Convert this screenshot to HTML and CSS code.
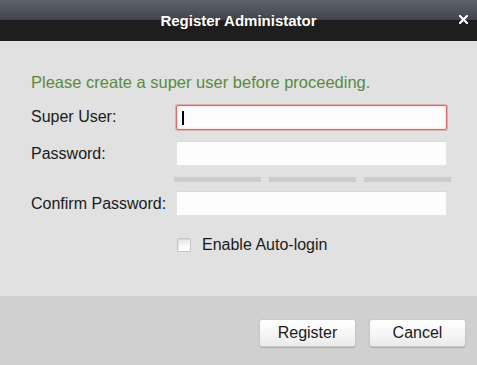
FILE: index.html
```html
<!DOCTYPE html>
<html lang="en">
<head>
<meta charset="utf-8">
<title>Register Administator</title>
<link rel="stylesheet" href="styles.css">
</head>
<body>
<div class="dialog">
  <div class="titlebar">
    <span class="title">Register Administator</span>
    <svg class="close" width="9" height="9" viewBox="0 0 9 9" aria-label="Close">
      <path d="M1 1 L8 8 M8 1 L1 8" stroke="#ffffff" stroke-width="2.2" stroke-linecap="square"/>
    </svg>
  </div>
  <div class="content">
    <p class="message">Please create a super user before proceeding.</p>
    <div class="form">
      <label class="label">Super User:</label>
      <div class="field focused"><input type="text"><span class="caret"></span></div>
      <label class="label">Password:</label>
      <div class="field"><input type="password"></div>
      <div class="strength">
        <span class="bar"></span><span class="bar"></span><span class="bar"></span>
      </div>
      <label class="label">Confirm Password:</label>
      <div class="field"><input type="password"></div>
      <div class="check-row">
        <span class="checkbox"></span>
        <span class="check-label">Enable Auto-login</span>
      </div>
    </div>
  </div>
  <div class="footer">
    <button class="btn">Register</button>
    <button class="btn">Cancel</button>
  </div>
</div>
</body>
</html>
```

FILE: styles.css
```css
html, body {
  margin: 0;
  padding: 0;
}
body {
  width: 477px;
  height: 365px;
  overflow: hidden;
  font-family: "Liberation Sans", Arial, sans-serif;
  font-size: 16px;
  color: #1a1a1a;
}
.dialog {
  display: flex;
  flex-direction: column;
  height: 365px;
}
.titlebar {
  position: relative;
  height: 41px;
  flex: none;
  display: flex;
  align-items: center;
  justify-content: center;
  background: linear-gradient(to bottom, #5e636b 0, #40444a 20px, #1e1e1e 20px, #1e1e1e 100%);
}
.title {
  color: #ffffff;
  font-weight: bold;
  font-size: 15px;
  line-height: 18px;
  margin-top: 1px;
}
.close {
  position: absolute;
  right: 9px;
  top: 15px;
}
.content {
  flex: none;
  height: 255px;
  background: #e1e1e1;
  padding: 0 0 0 31px;
  box-sizing: border-box;
}
.message {
  margin: 0;
  padding-top: 32px;
  line-height: 18px;
  font-size: 16.5px;
  color: #5a8a40;
}
.form {
  margin-top: 13px;
  display: grid;
  grid-template-columns: 145px 271px;
  grid-auto-rows: auto;
  align-items: center;
}
.label {
  line-height: 18px;
}
.field {
  position: relative;
  height: 25px;
  box-sizing: border-box;
  border: 1px solid #e4e4e4;
  border-top-color: #dadada;
  background: #fdfdfd;
}
.field input {
  display: block;
  width: 100%;
  height: 100%;
  border: 0;
  padding: 0 5px;
  box-sizing: border-box;
  background: transparent;
  outline: none;
  font: inherit;
}
.form > .field:nth-of-type(1) {
  margin-top: 1px;
}
.field.focused {
  border: 1px solid #d66b6b;
  box-shadow: 0 0 0 1px rgba(214, 120, 120, 0.45), inset 0 0 3px rgba(230, 110, 110, 0.35);
  border-radius: 2px;
}
.caret {
  position: absolute;
  left: 5px;
  top: 5px;
  width: 2px;
  height: 14px;
  background: #000000;
}
.form > .field:nth-child(4) {
  margin-top: 11px;
}
.form > label:nth-child(3) {
  margin-top: 11px;
}
.strength {
  grid-column: 2;
  margin: 11px 0 0 -2px;
  width: 277px;
  display: grid;
  grid-template-columns: 87px 87px 87px;
  column-gap: 8px;
}
.bar {
  height: 5px;
  background: #cdcdcd;
}
.form > label:nth-child(6),
.form > .field:nth-child(7) {
  margin-top: 9px;
}
.check-row {
  grid-column: 2;
  margin-top: 20px;
  display: flex;
  align-items: center;
  gap: 11px;
  margin-left: 1px;
}
.checkbox {
  width: 14px;
  height: 14px;
  box-sizing: border-box;
  border: 1px solid #c6c6c6;
  border-radius: 2px;
  background: linear-gradient(to bottom, #e6e6e6 0, #fafafa 60%, #ffffff 100%);
  box-shadow: inset 1px 1px 1px rgba(0, 0, 0, 0.08);
}
.check-label {
  line-height: 18px;
}
.footer {
  flex: 1;
  background: #d0d0d0;
  display: flex;
  justify-content: flex-end;
  align-items: flex-start;
  gap: 13px;
  padding: 23px 11px 0 0;
  box-sizing: border-box;
}
.btn {
  width: 97px;
  height: 28px;
  font: inherit;
  color: #1a1a1a;
  border: 1px solid #c8c8c8;
  border-radius: 3px;
  background: linear-gradient(to bottom, #ffffff 0, #f4f4f4 60%, #e9e9e9 100%);
  box-shadow: 0 1px 1px rgba(0, 0, 0, 0.18);
  padding: 0;
  line-height: 26px;
}
```
